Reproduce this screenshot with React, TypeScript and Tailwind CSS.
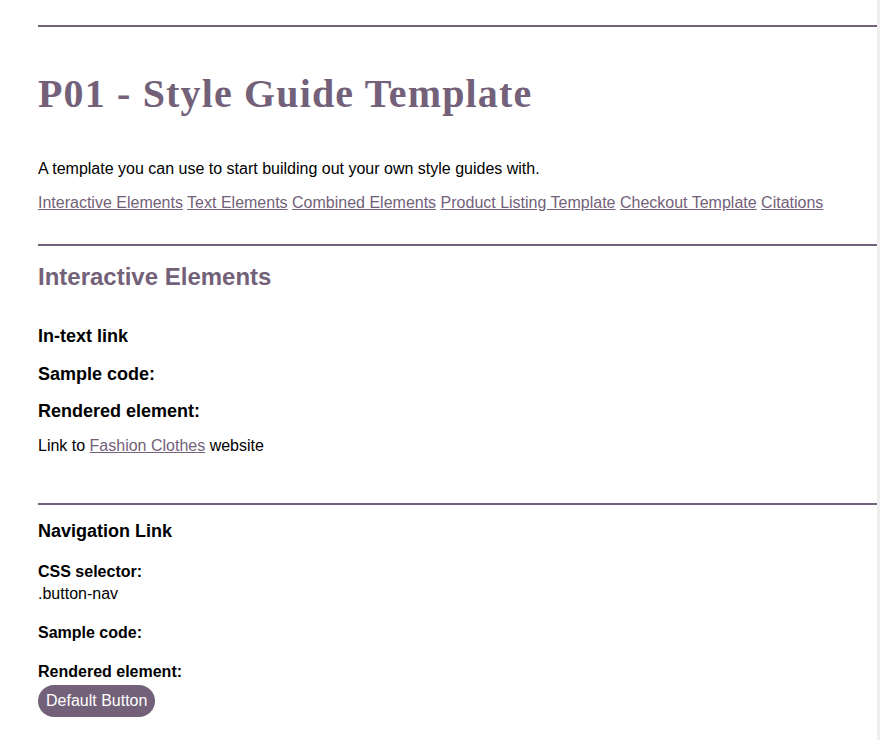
import React from "react";

export default function App() {
  return (
    <div className="flex w-[880px] min-h-[740px] bg-white">
      <div className="w-[877px] pl-[38px] font-['Liberation_Sans',Arial,sans-serif] text-black">
        <div className="h-[25px]" />
        <div className="h-[2px] bg-[#736179]" />
        <h1 className="mt-[45px] h-[44px] leading-[44px] text-[40px] tracking-[1.15px] font-bold text-[#736179] font-['Liberation_Serif',Georgia,serif]">
          P01 - Style Guide Template
        </h1>
        <p className="mt-[44px] text-[16px] leading-[18px]">
          A template you can use to start building out your own style guides with.
        </p>
        <p className="mt-[16px] text-[16px] leading-[18px] text-[#736179]">
          <a className="underline">Interactive Elements</a> <a className="underline">Text Elements</a>{" "}
          <a className="underline">Combined Elements</a> <a className="underline">Product Listing Template</a>{" "}
          <a className="underline">Checkout Template</a> <a className="underline">Citations</a>
        </p>
        <div className="mt-[32px] h-[2px] bg-[#736179]" />
        <h2 className="mt-[17px] text-[24px] leading-[28px] font-bold text-[#736179]">Interactive Elements</h2>
        <h4 className="mt-[35px] text-[18px] leading-[20px] font-bold">In-text link</h4>
        <h4 className="mt-[18px] text-[18px] leading-[20px] font-bold">Sample code:</h4>
        <h4 className="mt-[17px] text-[18px] leading-[20px] font-bold">Rendered element:</h4>
        <p className="mt-[16px] text-[16px] leading-[18px]">
          Link to <a className="underline text-[#736179]">Fashion Clothes</a> website
        </p>
        <div className="mt-[48px] h-[2px] bg-[#736179]" />
        <h4 className="mt-[16px] text-[18px] leading-[20px] font-bold">Navigation Link</h4>
        <p className="mt-[20px] text-[16px] leading-[22px] font-bold">CSS selector:</p>
        <p className="text-[16px] leading-[22px]">.button-nav</p>
        <p className="mt-[17px] text-[16px] leading-[22px] font-bold">Sample code:</p>
        <p className="mt-[17px] text-[16px] leading-[22px] font-bold">Rendered element:</p>
        <div className="mt-[2px]">
          <span className="inline-block rounded-full bg-[#736179] px-[8px] py-[7px] text-[16px] leading-[18px] text-white">
            Default Button
          </span>
        </div>
      </div>
      <div className="w-[3px] bg-[#efefef]" />
    </div>
  );
}
